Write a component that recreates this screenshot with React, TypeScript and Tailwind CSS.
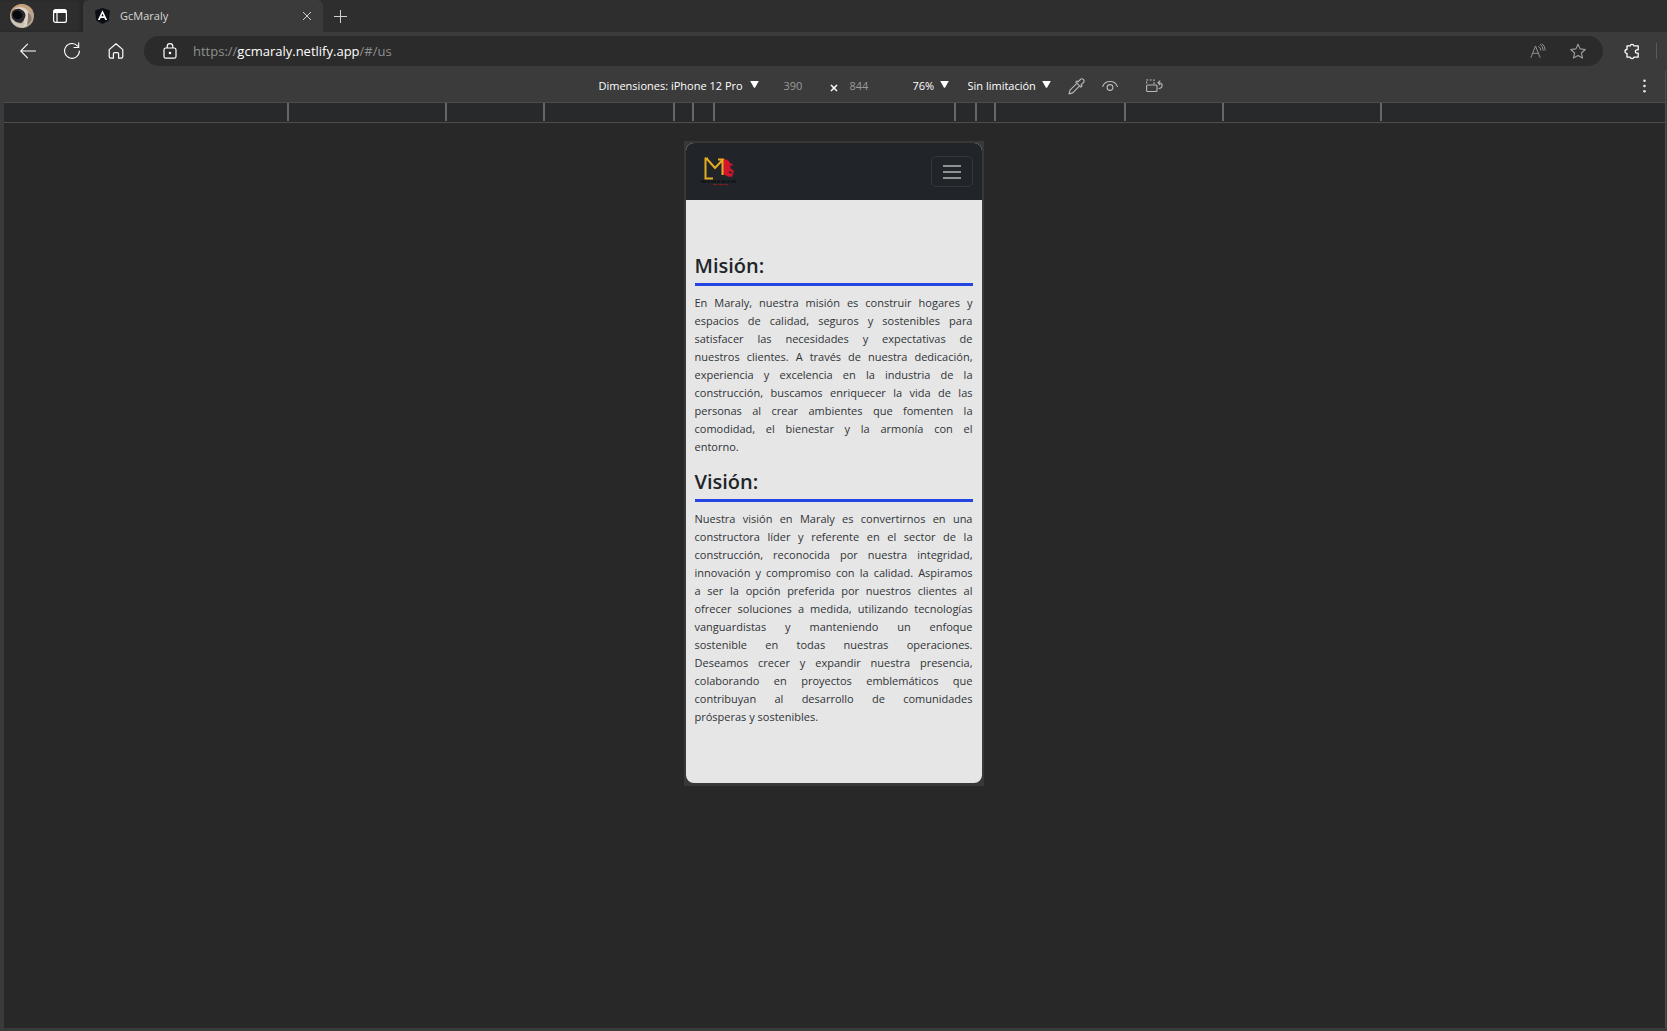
import React from "react";

const rulerSegments = [
  "w-[158px]",
  "w-[98px]",
  "w-[130px]",
  "w-[19px]",
  "w-[21px]",
  "w-[241px]",
  "w-[21px]",
  "w-[19px]",
  "w-[130px]",
  "w-[98px]",
  "w-[158px]",
];

const mission = [
  "En Maraly, nuestra misión es construir hogares y",
  "espacios de calidad, seguros y sostenibles para",
  "satisfacer las necesidades y expectativas de",
  "nuestros clientes. A través de nuestra dedicación,",
  "experiencia y excelencia en la industria de la",
  "construcción, buscamos enriquecer la vida de las",
  "personas al crear ambientes que fomenten la",
  "comodidad, el bienestar y la armonía con el",
  "entorno.",
];

const vision = [
  "Nuestra visión en Maraly es convertirnos en una",
  "constructora líder y referente en el sector de la",
  "construcción, reconocida por nuestra integridad,",
  "innovación y compromiso con la calidad. Aspiramos",
  "a ser la opción preferida por nuestros clientes al",
  "ofrecer soluciones a medida, utilizando tecnologías",
  "vanguardistas y manteniendo un enfoque",
  "sostenible en todas nuestras operaciones.",
  "Deseamos crecer y expandir nuestra presencia,",
  "colaborando en proyectos emblemáticos que",
  "contribuyan al desarrollo de comunidades",
  "prósperas y sostenibles.",
];

function Caret() {
  return (
    <svg width="9" height="7" viewBox="0 0 9 7" fill="#fff" className="pointer-events-none -mt-1 shrink-0" aria-hidden="true">
      <path d="M0.2 0h8.6L5.3 6.2q-.8 1-1.6 0z" />
    </svg>
  );
}

function Picker({ label, value, className }: { label: string; value: string; className: string }) {
  return (
    <label className={className}>
      <select
        aria-label={label}
        defaultValue={value}
        className="field-sizing-content shrink-0 cursor-pointer appearance-none bg-transparent text-white outline-none"
      >
        <option>{value}</option>
      </select>
      <Caret />
    </label>
  );
}

function ProfilePicture() {
  return (
    <svg width="24" height="24" viewBox="0 0 24 24" aria-hidden="true">
      <defs>
        <clipPath id="face">
          <circle cx="12" cy="12" r="12" />
        </clipPath>
      </defs>
      <g clipPath="url(#face)">
        <rect width="24" height="24" fill="#b7a795" />
        <path d="M0 9Q3 0 12 0q9 1 12 10l-3-1q-3-5-9-5T3 8z" fill="#c3a17c" />
        <path d="M4 5q6-4 12 0 4 3 5 8l-3 8-5 3 1-10-4-8z" fill="#ddd2c6" />
        <path d="M18 8q5 4 3 9l-4 5 1-8z" fill="#8d7b6d" />
        <path d="M0 14q2 6 6 8l6 2 3-5-6 1z" fill="#cfc4b8" />
        <path d="M2 8q3-4 8-3 5 2 5.500 6-.5 5-4.500 8l-5-1q-6-4-4-10z" fill="#2b292d" />
        <path d="M3 9q2-3 6-2 4 2 3 6-3 3-6 2-4-2-3-6z" fill="#07080c" />
      </g>
    </svg>
  );
}

function TabStrip() {
  return (
    <div className="flex h-8 bg-[#2e2e2e]">
      <div className="flex w-[83px] shrink-0 items-center gap-[19px] pl-[10px] shadow-[inset_-3px_0_3px_#272727]">
        <button aria-label="Perfil">
          <ProfilePicture />
        </button>
        <button aria-label="Menú de acciones de pestaña">
          <svg width="14" height="14" viewBox="0 0 14 14" fill="none" stroke="#fff" strokeWidth="1.2" aria-hidden="true">
            <rect x=".6" y=".6" width="12.8" height="12.8" rx="2" />
            <path d="M1 1h12v3H1z" fill="#fff" stroke="none" />
            <path d="M4 3v10" />
          </svg>
        </button>
      </div>
      <div className="flex w-[240px] items-center rounded-t-md bg-[#3b3b3b] pr-[11px] pl-3">
        <svg width="15" height="16" viewBox="0 0 15 16" aria-hidden="true">
          <path d="M7.500 0 15 2.600 13.800 12.500 7.500 16 1.200 12.500 0 2.600z" fill="#0b0e14" />
          <path d="m7.500 2.200-4.700 9.900h2l.9-2.200h3.600l.9 2.200h2zM6.400 8.200 7.500 5.500l1.100 2.700z" fill="#fff" fillRule="evenodd" />
        </svg>
        <span className="ml-[10px] grow text-[11px] text-[#d6d6d6]">GcMaraly</span>
        <button aria-label="Cerrar pestaña">
          <svg width="10" height="10" viewBox="0 0 10 10" stroke="#cfcfcf" aria-hidden="true">
            <path d="m1 1 8 8M9 1 1 9" />
          </svg>
        </button>
      </div>
      <button aria-label="Nueva pestaña" className="ml-[10px]">
        <svg width="15" height="15" viewBox="0 0 15 15" stroke="#cfcfcf" aria-hidden="true">
          <path d="M7.500 1v13M1 7.500h13" />
        </svg>
      </button>
    </div>
  );
}

function AddressBar() {
  return (
    <div className="flex h-[38px] items-center pl-5 text-white">
      <div className="flex w-[124px] shrink-0 items-center gap-7">
        <button aria-label="Atrás">
          <svg width="16" height="16" viewBox="0 0 16 16" fill="none" stroke="currentColor" strokeWidth="1.1" strokeLinecap="round" aria-hidden="true">
            <path d="M15.500 8H.7M7.500 1.200.7 8l6.800 6.800" />
          </svg>
        </button>
        <button aria-label="Actualizar">
          <svg width="16" height="18" viewBox="0 0 16 18" fill="none" stroke="currentColor" strokeWidth="1.1" strokeLinecap="round" aria-hidden="true">
            <path d="M15.400 9A7.400 7.400 0 1 1 13.700 4.200M14.700.8v4.700H10" />
          </svg>
        </button>
        <button aria-label="Inicio">
          <svg width="16" height="16" viewBox="0 0 16 16" fill="none" stroke="currentColor" strokeWidth="1.200" strokeLinejoin="round" aria-hidden="true">
            <path d="M1.200 6.600 8 .8l6.800 5.800v7q0 1.600-1.600 1.600h-2.600v-4.400q0-1.200-1.200-1.200H6.600q-1.200 0-1.200 1.200v4.400H2.800q-1.600 0-1.600-1.600z" />
          </svg>
        </button>
      </div>
      <div className="flex h-[30px] grow items-center rounded-full bg-[#2b2b2b] pr-[17px] pl-[19px]">
        <button aria-label="Ver información del sitio">
          <svg width="14" height="16" viewBox="0 0 14 16" fill="none" stroke="currentColor" strokeWidth="1.200" aria-hidden="true">
            <rect x="1" y="5" width="12" height="10.200" rx="1.800" />
            <path d="M4.200 5V3.400a2.800 2.800 0 0 1 5.600 0V5" />
            <circle cx="7" cy="10" r=".7" fill="currentColor" />
          </svg>
        </button>
        <div
          role="textbox"
          aria-label="Barra de direcciones"
          tabIndex={0}
          className="ml-4 grow text-[13px]/5 whitespace-nowrap text-[#8f8f8f] outline-none"
        >
          https://<span className="text-white">gcmaraly.netlify.app</span>/#/us
        </div>
        <button aria-label="Leer en voz alta" className="text-[#929292]">
          <svg width="16" height="16" viewBox="0 0 16 16" fill="none" stroke="currentColor" strokeLinecap="round" aria-hidden="true">
            <path d="M1 14.300 5.500 3l4.500 11.300M2.600 10.300h5.800M8.800 3.400q2 1.200 2 3.800M10.300 1.300q3 2 2.900 5.900M12.300.8q2.900 2.300 2.900 6.400" />
          </svg>
        </button>
        <button aria-label="Agregar a favoritos" className="ml-6 text-[#a0a0a0]">
          <svg width="16" height="17" viewBox="0 0 16 17" fill="none" stroke="currentColor" strokeWidth="1.100" strokeLinejoin="round" aria-hidden="true">
            <path d="m8 1.200 2.100 4.700 5.200.6-3.900 3.500 1.100 5.100L8 12.600l-4.500 2.500 1.100-5.100L.7 6.500l5.200-.6z" />
          </svg>
        </button>
      </div>
      <button aria-label="Extensiones" className="ml-[21px]">
        <svg width="16" height="17" viewBox="0 0 16 17" fill="none" stroke="currentColor" strokeWidth="1.300" strokeLinejoin="round" aria-hidden="true">
          <path d="M3 2.800h3.200a1.900 1.900 0 0 1 3.700 0h4.300v4h-1.200a1.700 1.700 0 0 0 0 3.400h1.200v4H9.900a1.900 1.900 0 0 1-3.700 0H3v-3.700a2 2 0 0 1 0-4z" />
        </svg>
      </button>
      <div className="mr-[10px] ml-4 h-4 w-px bg-[#5a5a5a]" />
    </div>
  );
}

function DeviceToolbar() {
  return (
    <div className="flex h-[33px] items-center border-b border-[#4d4d4d] pr-[19px] pl-[114px] text-[11px] text-white">
      <div className="flex grow items-center justify-center">
        <Picker label="Dimensiones" value="Dimensiones: iPhone 12 Pro" className="flex w-[160px] items-center justify-between whitespace-nowrap" />
        <input aria-label="Ancho" defaultValue="390" className="ml-[25px] w-[46px] bg-transparent text-[#9a9a9a] outline-none" />
        <svg width="8" height="8" viewBox="0 0 8 8" stroke="#fff" strokeWidth="1.500" className="mt-1" aria-hidden="true">
          <path d="m1 1 6 6M7 1 1 7" />
        </svg>
        <input aria-label="Alto" defaultValue="844" className="ml-3 w-[63px] bg-transparent text-[#9a9a9a] outline-none" />
        <Picker label="Zoom" value="76%" className="mr-[19px] flex w-9 items-center justify-between whitespace-nowrap" />
        <Picker label="Limitación" value="Sin limitación" className="mr-[17px] flex w-[83px] items-center justify-between whitespace-nowrap" />
        <button aria-label="Cuentagotas" className="text-[#b8b8b8]">
          <svg width="17" height="17" viewBox="0 0 17 17" fill="none" stroke="currentColor" strokeWidth="1.100" strokeLinejoin="round" aria-hidden="true">
            <path d="m9 5.200-7 7-1 3.700 3.700-1 7-7M7.800 4.100l5 5 1.200-1.200-1-1 2.400-2.400a2.100 2.100 0 0 0-3-3L10 3.900l-1-1z" />
          </svg>
        </button>
        <button aria-label="Deficiencias de visión" className="ml-[17px] text-[#b8b8b8]">
          <svg width="16" height="12" viewBox="0 0 16 12" fill="none" stroke="currentColor" strokeWidth="1.100" strokeLinecap="round" aria-hidden="true">
            <path d="M.7 6.500q1.800-5 7.300-5t7.300 5" />
            <circle cx="8" cy="7.500" r="2.900" />
          </svg>
        </button>
        <button aria-label="Girar" className="ml-7 text-[#b8b8b8]">
          <svg width="17" height="14" viewBox="0 0 17 14" fill="none" stroke="currentColor" strokeWidth="1.100" aria-hidden="true">
            <rect x=".6" y="6" width="10.400" height="6.500" rx="1" />
            <path d="M.6 4.500V1h7.400v4" strokeDasharray="2 1.300" />
            <path d="M12.500 9.500q3.600 0 3.600-2.900 0-2.800-3.600-2.800M14.200 1.600l-2.200 2.200 2.200 2.200" />
          </svg>
        </button>
      </div>
      <button aria-label="Más opciones">
        <svg width="3" height="14" viewBox="0 0 3 14" fill="#e6e6e6" aria-hidden="true">
          <circle cx="1.500" cy="1.800" r="1.300" />
          <circle cx="1.500" cy="7" r="1.300" />
          <circle cx="1.500" cy="12.200" r="1.300" />
        </svg>
      </button>
    </div>
  );
}

function Ruler() {
  return (
    <div className="flex h-5 justify-center border-b border-[#4d4d4d] bg-[#28292a] pb-px">
      {rulerSegments.map((width, i) => (
        <div key={i} className={`${width} shrink-0 border-l-2 border-[#666]`} />
      ))}
      <div className="w-0.5 bg-[#666]" />
    </div>
  );
}

function BrandLogo() {
  return (
    <svg width="36" height="30" viewBox="0 0 36 30" fill="none" aria-label="Maraly" role="img">
      <path d="m22 1 6 3v16l-6-3zM28 5l4 3-3 3 4 3-2 6-4-1z" fill="#d3162b" />
      <path d="m29 9 2 1M28 15l3 1" stroke="#212529" strokeWidth="1.500" />
      <path d="M7 1.500H4.500v20H12M6 2l8 9 8.500-9M17 2.500h4.500V18" stroke="#e3ad22" strokeWidth="2" />
      <path d="M0 24.500h35" stroke="#111417" strokeWidth="2" strokeDasharray="5 1 3 1" />
      <path d="M12 27.500h15" stroke="#8b1a26" strokeDasharray="3 .6 2 .6" />
    </svg>
  );
}

function Statement({ title, lines }: { title: string; lines: string[] }) {
  return (
    <section>
      <h2 className="border-b-[3px] border-[#2545e0] pb-0.5 text-[20px]/[30px] font-semibold text-[#212529]">{title}</h2>
      <p className="mt-2 text-[11px]/[18px] text-[#303437]">
        {lines.map((line, i) => (
          <span
            key={line}
            className={i < lines.length - 1 ? "block whitespace-nowrap [text-align-last:justify]" : "block"}
          >
            {line}{" "}
          </span>
        ))}
      </p>
    </section>
  );
}

function Phone() {
  return (
    <div className="h-[645px] w-[300px] bg-[#383838] p-0.5 pb-[3px]">
      <div className="flex h-full flex-col overflow-hidden rounded-lg bg-[#e6e6e6]">
        <nav className="flex h-[57px] shrink-0 items-center justify-between bg-[#212529] pr-[9px] pl-[15px]">
          <a href="#/us">
            <BrandLogo />
          </a>
          <button
            aria-label="Abrir menú"
            className="flex h-[31px] w-[42px] flex-col items-center justify-center gap-1 rounded-[5px] border border-[#34383c]"
          >
            <span className="h-0.5 w-[18px] bg-[#909294]" />
            <span className="h-0.5 w-[18px] bg-[#909294]" />
            <span className="h-0.5 w-[18px] bg-[#909294]" />
          </button>
        </nav>
        <main className="flex flex-col gap-[11px] px-[9px] pt-[51px]">
          <Statement title="Misión:" lines={mission} />
          <Statement title="Visión:" lines={vision} />
        </main>
      </div>
    </div>
  );
}

export default function App() {
  return (
    <div className="flex min-h-screen flex-col bg-[#3b3b3b] font-['Open_Sans','Noto_Sans',sans-serif]">
      <TabStrip />
      <AddressBar />
      <div className="mb-[3px] ml-1 mr-px flex grow flex-col border-r border-[#4d4d4d]">
        <DeviceToolbar />
        <Ruler />
        <div className="flex grow items-start justify-center bg-[#282828] pt-[18px] pr-0.5">
          <Phone />
        </div>
      </div>
    </div>
  );
}
